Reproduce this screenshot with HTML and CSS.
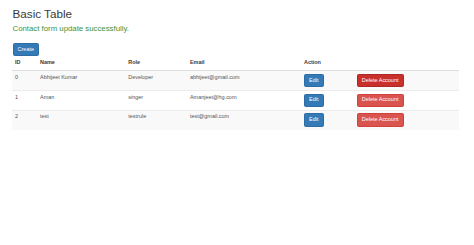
FILE: index.html
```html
<!DOCTYPE html>
<html lang="en">
<head>
<meta charset="utf-8">
<title>Basic Table</title>
<link rel="stylesheet" href="styles.css">
</head>
<body>
<div class="container">
  <h2 class="title">Basic Table</h2>
  <h4 class="success">Contact form update successfully.</h4>
  <a class="btn btn-primary" href="#">Create</a>
  <table class="table">
    <thead>
      <tr>
        <th class="c-id">ID</th>
        <th class="c-name">Name</th>
        <th class="c-role">Role</th>
        <th class="c-email">Email</th>
        <th class="c-action">Action</th>
        <th class="c-del"></th>
      </tr>
    </thead>
    <tbody>
      <tr>
        <td>0</td>
        <td>Abhijeet Kumar</td>
        <td>Developer</td>
        <td>abhijeet@gmail.com</td>
        <td><a class="btn btn-primary" href="#">Edit</a></td>
        <td><a class="btn btn-danger btn-active" href="#">Delete Account</a></td>
      </tr>
      <tr>
        <td>1</td>
        <td>Aman</td>
        <td>singer</td>
        <td>Amanjeet@hg.com</td>
        <td><a class="btn btn-primary" href="#">Edit</a></td>
        <td><a class="btn btn-danger" href="#">Delete Account</a></td>
      </tr>
      <tr>
        <td>2</td>
        <td>test</td>
        <td>testrule</td>
        <td>test@gmail.com</td>
        <td><a class="btn btn-primary" href="#">Edit</a></td>
        <td><a class="btn btn-danger" href="#">Delete Account</a></td>
      </tr>
    </tbody>
  </table>
</div>
</body>
</html>
```
FILE: styles.css
```css
* { box-sizing: border-box; }

html, body {
  margin: 0;
  padding: 0;
  background: #fff;
}

body {
  font-family: "Liberation Sans", Arial, Helvetica, sans-serif;
  font-size: 5.46px;
  line-height: 7.8px;
  color: #333;
}

.container {
  padding: 0 0 0 12.5px;
}

.title {
  margin: 7.8px 0 3.9px;
  font-size: 11.7px;
  line-height: 12.87px;
  font-weight: 500;
  color: #3a3a3a;
}

.success {
  margin: 3.9px 0 9.75px;
  font-size: 7.8px;
  line-height: 8.58px;
  font-weight: normal;
  color: #3d933d;
}

.btn {
  display: inline-block;
  vertical-align: top;
  padding: 1.73px 4.1px;
  border: 1px solid transparent;
  border-radius: 1.56px;
  font-size: 5.46px;
  line-height: 7.8px;
  text-align: center;
  white-space: nowrap;
  text-decoration: none;
  color: #fff;
}

.btn-primary {
  background: #337ab7;
  border-color: #2e6da4;
}

.btn-danger {
  background: #d9534f;
  border-color: #d43f3a;
}

.btn-danger.btn-active {
  background: #c9302c;
  border-color: #ac2925;
}

.table {
  width: 447px;
  border-collapse: collapse;
  border-spacing: 0;
  table-layout: fixed;
  margin-left: -0.5px;
}

.table th,
.table td {
  padding: 2.8px 3.12px;
  text-align: left;
  vertical-align: top;
  line-height: 7.8px;
}

.table th {
  padding: 3.05px 3.12px;
  font-weight: bold;
  vertical-align: bottom;
  color: #3a3a3a;
  border-bottom: 1px solid #dedede;
}

.table td {
  color: #555;
  border-top: 1px solid #ececec;
}

.table tbody tr:first-child td {
  border-top: 0;
}

.table tbody tr:nth-of-type(odd) {
  background: #f9f9f9;
}

.c-id { width: 24.9px; }
.c-name { width: 88.3px; }
.c-role { width: 61.7px; }
.c-email { width: 114px; }
.c-action { width: 52.7px; }
.c-del { width: 105.4px; }
```
